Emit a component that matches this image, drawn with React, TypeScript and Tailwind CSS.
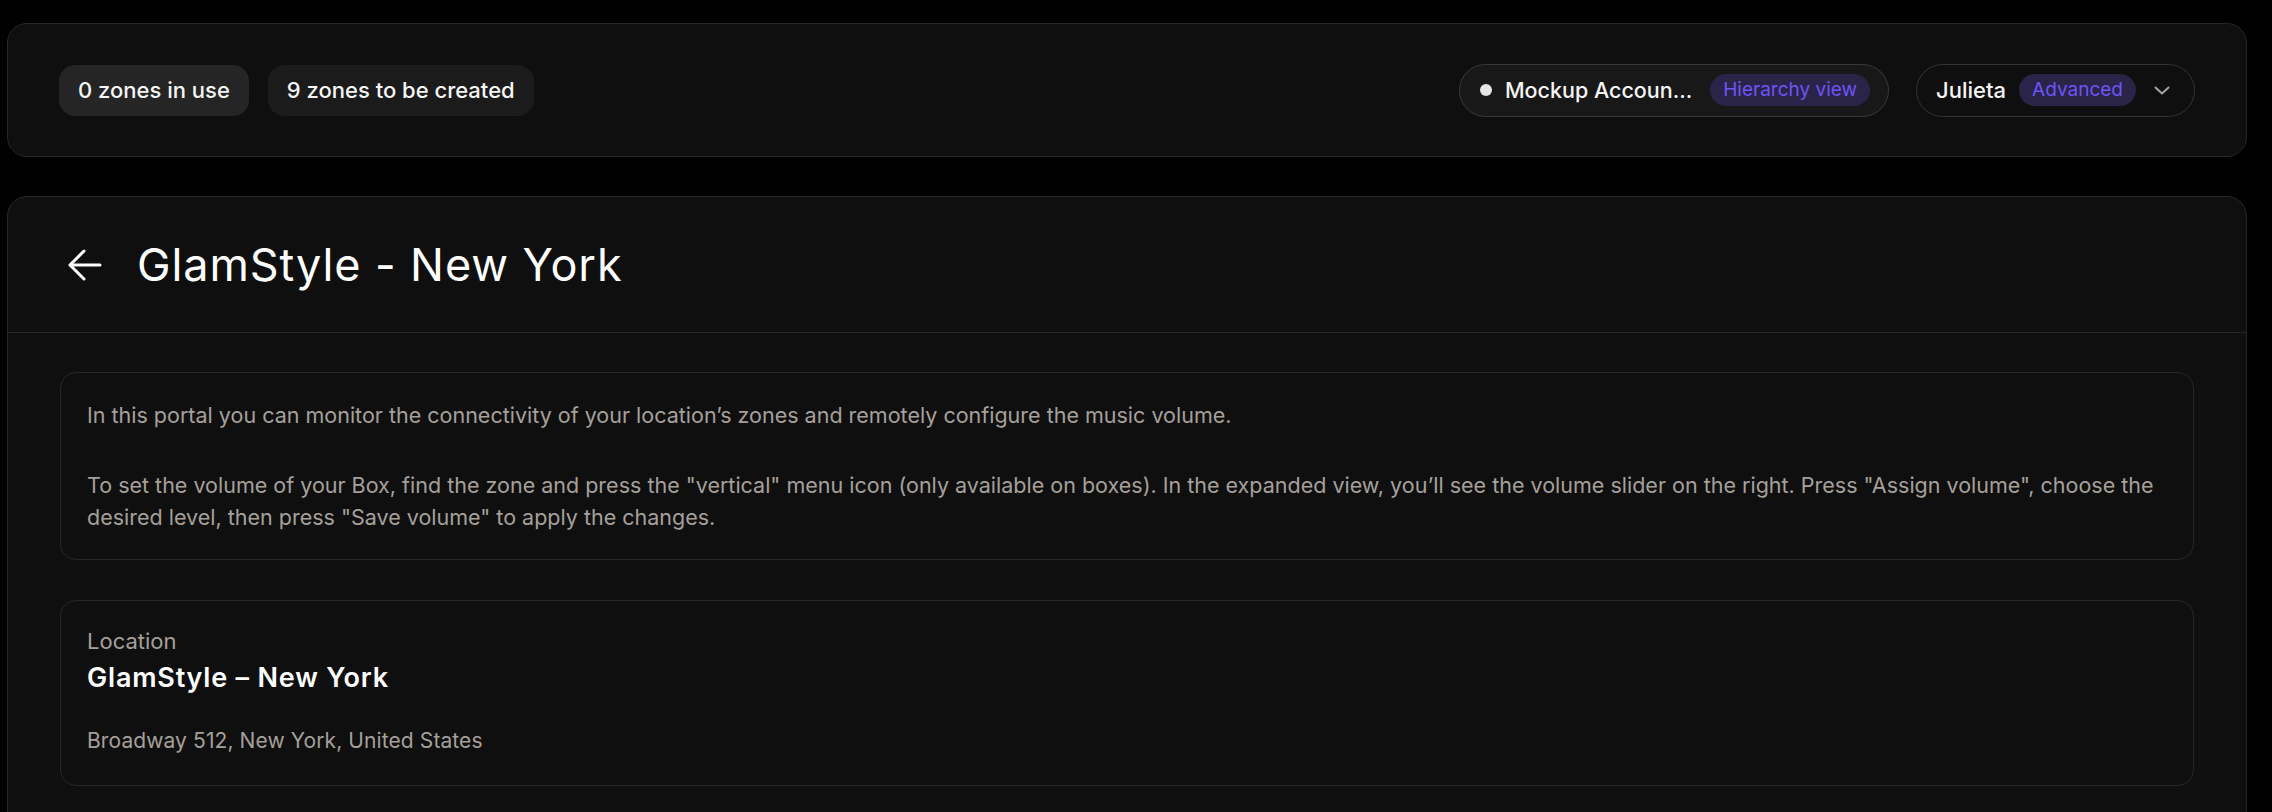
import React from 'react';

const fontBody = "font-['Inter','Noto_Sans',sans-serif]";

const Chip: React.FC<{ label: string; tone: 'light' | 'dark' }> = ({ label, tone }) => (
  <div
    className={`h-[51px] flex items-center px-[19px] rounded-2xl text-[22px] font-medium text-[#f5f5f5] ${
      tone === 'light' ? 'bg-[#252525]' : 'bg-[#1b1b1b]'
    }`}
  >
    {label}
  </div>
);

const Badge: React.FC<{ label: string }> = ({ label }) => (
  <span className="h-8 flex items-center px-[13px] rounded-full bg-[#2a2448] text-[#6e55f5] text-[19px]">
    {label}
  </span>
);

const ArrowBack = () => (
  <svg width="34" height="34" viewBox="0 0 34 34" fill="none" stroke="currentColor" strokeWidth="3" strokeLinecap="round" strokeLinejoin="round">
    <path d="M32 17H3" />
    <path d="M16 3 2 17l14 14" />
  </svg>
);

const Chevron = () => (
  <svg width="16" height="9" viewBox="0 0 16 9" fill="none" stroke="currentColor" strokeWidth="2" strokeLinecap="round" strokeLinejoin="round">
    <path d="M1.5 1.5 8 7.5l6.5-6" />
  </svg>
);

export default function App() {
  return (
    <div className={`min-h-screen bg-black pt-[23px] pl-[7px] pr-[25px] ${fontBody}`}>
      {/* Top bar */}
      <div className="h-[134px] flex items-center justify-between px-[51px] rounded-[20px] border border-[#262626] bg-[#0f0f0f]">
        <div className="flex items-center gap-[19px]">
          <Chip label="0 zones in use" tone="light" />
          <Chip label="9 zones to be created" tone="dark" />
        </div>

        <div className="flex items-center gap-[27px]">
          <div className="h-[53px] flex items-center pl-[20px] pr-[18px] rounded-full border border-[#3a3a3a] bg-[#181818]">
            <span className="w-3 h-3 rounded-full bg-[#e5e5e5]" />
            <span className="ml-[13px] text-[21.5px] font-medium text-[#f5f5f5]">Mockup Accoun...</span>
            <span className="ml-[18px]">
              <Badge label="Hierarchy view" />
            </span>
          </div>

          <div className="h-[53px] flex items-center pl-[19px] pr-[24px] rounded-full border border-[#333333] bg-[#0f0f0f]">
            <span className="text-[22px] font-medium text-[#f5f5f5]">Julieta</span>
            <span className="ml-[13px]">
              <Badge label="Advanced" />
            </span>
            <span className="ml-[18px] text-[#a3a3a3]">
              <Chevron />
            </span>
          </div>
        </div>
      </div>

      {/* Location detail */}
      <div className="mt-[39px] rounded-t-[20px] border border-[#262626] bg-[#0f0f0f] pb-10">
        <div className="h-[136px] flex items-center gap-[35px] pl-[60px] border-b border-[#262626] text-white">
          <ArrowBack />
          <h1 className="text-[45px] font-normal tracking-[0.9px]">GlamStyle - New York</h1>
        </div>

        <div className="px-[52px] pt-[39px] flex flex-col gap-10">
          <div className="rounded-2xl border border-[#262626] px-[26px] pt-[26px] pb-[26px] text-[21.5px] leading-8 text-[#a6a09b]">
            <p>In this portal you can monitor the connectivity of your location’s zones and remotely configure the music volume.</p>
            <p className="mt-[38px]">
              To set the volume of your Box, find the zone and press the "vertical" menu icon (only available on boxes). In the
              expanded view, you’ll see the volume slider on the right. Press "Assign volume", choose the desired level, then
              press "Save volume" to apply the changes.
            </p>
          </div>

          <div className="rounded-2xl border border-[#262626] px-[26px] pt-[24px] pb-[28px]">
            <div className="text-[22px] leading-8 text-[#a6a09b]">Location</div>
            <div className="mt-[5px] text-[27px] leading-8 font-semibold tracking-[0.8px] text-white">GlamStyle – New York</div>
            <div className="mt-[31px] text-[21px] leading-8 tracking-[0.1px] text-[#a6a09b]">Broadway 512, New York, United States</div>
          </div>
        </div>
      </div>
    </div>
  );
}
